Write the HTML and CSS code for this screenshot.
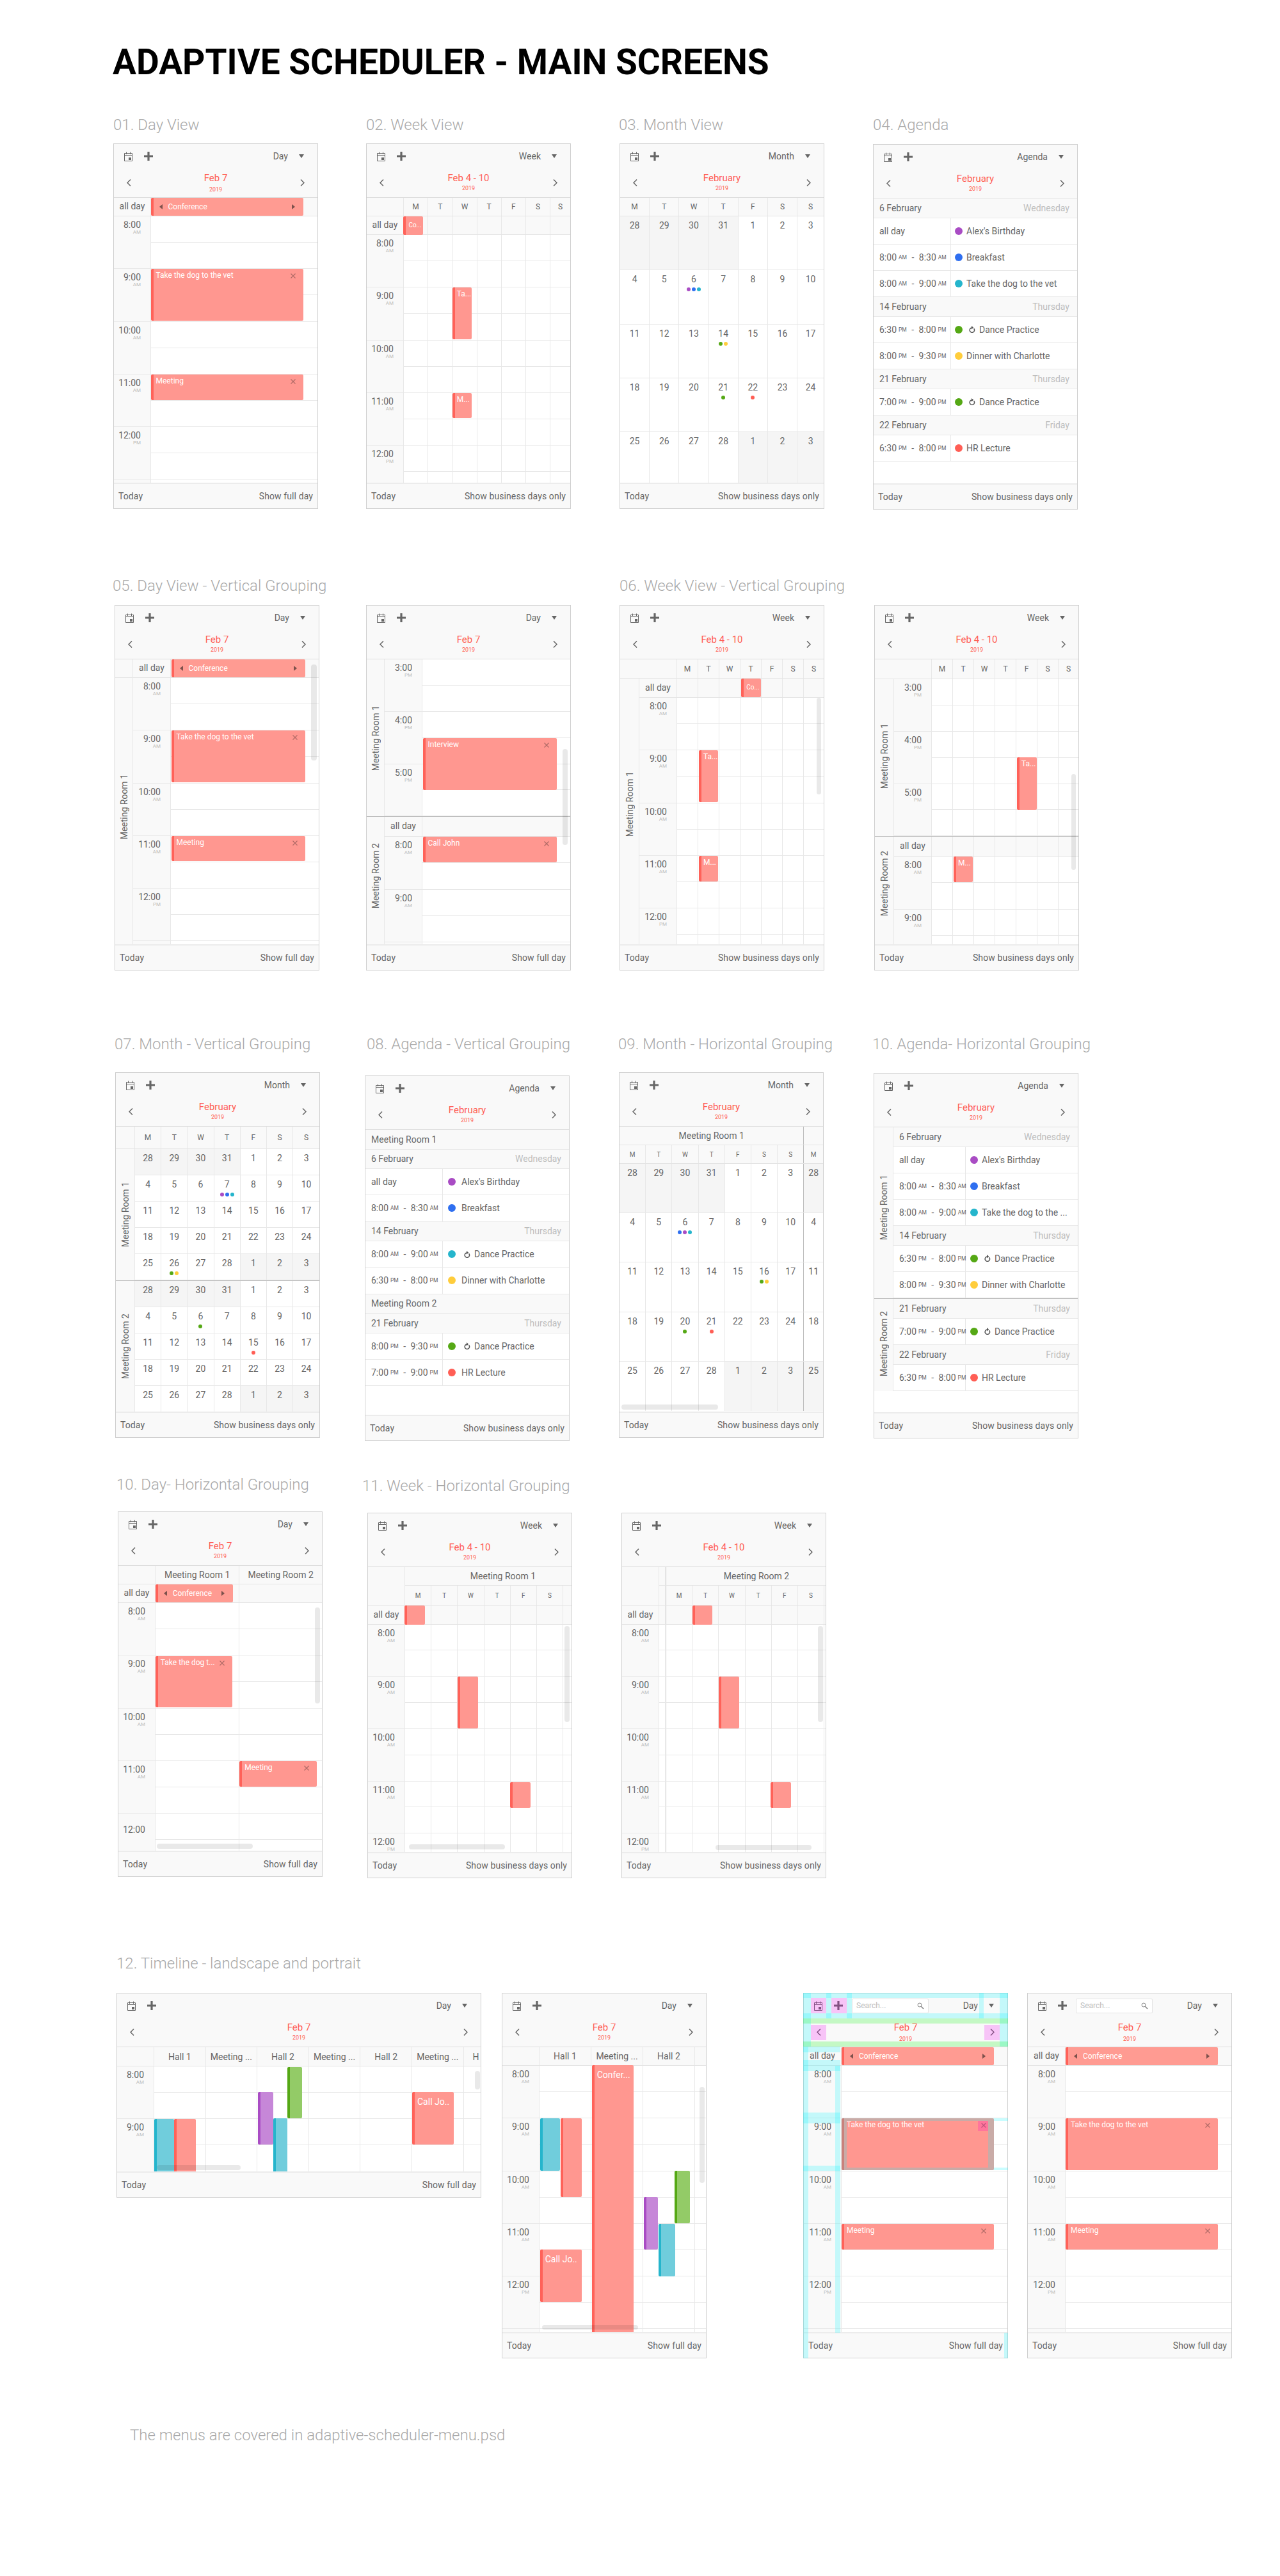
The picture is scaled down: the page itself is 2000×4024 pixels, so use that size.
FILE: index.html
```html
<!DOCTYPE html>
<html lang="en">
<head>
<meta charset="utf-8">
<title>Adaptive Scheduler - Main Screens</title>
<link rel="stylesheet" href="styles.css">
</head>
<body>
<h1 class="heading">ADAPTIVE SCHEDULER - MAIN SCREENS</h1>

<div class="row r1">
  <div class="slot s1"><h2 class="title">01. Day View</h2><div data-p="1"></div></div>
  <div class="slot s2"><h2 class="title">02. Week View</h2><div data-p="2"></div></div>
  <div class="slot s3"><h2 class="title">03. Month View</h2><div data-p="3"></div></div>
  <div class="slot s4"><h2 class="title">04. Agenda</h2><div data-p="4"></div></div>
</div>

<div class="row r2">
  <div class="slot s5"><h2 class="title">05. Day View - Vertical Grouping</h2><div data-p="5"></div></div>
  <div class="slot s6"><div class="title"></div><div data-p="6"></div></div>
  <div class="slot s7"><h2 class="title">06. Week View - Vertical Grouping</h2><div data-p="7"></div></div>
  <div class="slot s8"><div class="title"></div><div data-p="8"></div></div>
</div>

<div class="row r3">
  <div class="slot s9"><h2 class="title">07. Month - Vertical Grouping</h2><div data-p="9"></div></div>
  <div class="slot s10"><h2 class="title">08. Agenda - Vertical Grouping</h2><div data-p="10"></div></div>
  <div class="slot s11"><h2 class="title">09. Month - Horizontal Grouping</h2><div data-p="11"></div></div>
  <div class="slot s12"><h2 class="title">10. Agenda- Horizontal Grouping</h2><div data-p="12"></div></div>
</div>

<div class="row r4">
  <div class="slot s13"><h2 class="title">10. Day- Horizontal Grouping</h2><div data-p="13"></div></div>
  <div class="slot s14"><h2 class="title">11. Week - Horizontal Grouping</h2><div data-p="14"></div></div>
  <div class="slot s15"><div class="title"></div><div data-p="15"></div></div>
</div>

<div class="row r5">
  <div class="slot s16"><h2 class="title">12. Timeline - landscape and portrait</h2><div data-p="16"></div></div>
  <div class="slot s17"><div class="title"></div><div data-p="17"></div></div>
  <div class="slot s18"><div class="title"></div><div data-p="18"></div></div>
  <div class="slot s19"><div class="title"></div><div data-p="19"></div></div>
</div>

<p class="note">The menus are covered in adaptive-scheduler-menu.psd</p>
<script src="app.js"></script>
</body>
</html>
```
FILE: styles.css
```css
* { box-sizing: border-box; }
body { margin: 0; height: 4024px; background: #fff; font-family: Roboto, "Liberation Sans", sans-serif; color: #666; overflow-x: hidden; }
.heading { margin: 67px 0 53px 176px; height: 60px; line-height: 60px; font-size: 55px; font-weight: 700; color: #000; white-space: nowrap; }
.row { display: flex; align-items: flex-start; }
.r1 { height: 720px; } .r2 { height: 716px; } .r3 { height: 688px; } .r4 { height: 748px; } .r5 { height: 737px; }
.slot { width: 320px; flex: none; }
.s16 { width: 571px; }
.title { margin: 0; height: 30px; line-height: 30px; font-size: 24px; font-weight: 300; color: #a9a9a9; white-space: nowrap; }
.note { margin: 0 0 0 203px; height: 30px; line-height: 30px; font-size: 24px; font-weight: 300; color: #a9a9a9; }

.s1 { margin-left: 177px; } .s2 { margin-left: 75px; } .s3 { margin-left: 76px; } .s4 { margin-left: 76px; }
.s5 { margin-left: 179px; } .s6 { margin-left: 73px; } .s7 { margin-left: 76px; } .s8 { margin-left: 78px; }
.s9 { margin-left: 180px; } .s10 { margin-left: 70px; } .s11 { margin-left: 77px; } .s12 { margin-left: 78px; }
.s13 { margin-left: 184px; } .s14 { margin-left: 70px; } .s15 { margin-left: 77px; }
.s16 { margin-left: 182px; } .s17 { margin-left: 31px; } .s18 { margin-left: 151px; } .s19 { margin-left: 30px; }

.s3 .title, .s9 .title, .s11 .title { margin-left: -1px; }
.s5 .title { margin-left: -3px; }
.s12 .title { margin-left: -2px; }
.s10 .title { margin-left: 3px; }
.s13 .title { margin-left: -2px; }
.s14 .title { margin-left: -8px; margin-top: 2px; }

.r1 .panel { margin-top: 14px; }
.s4 .panel { margin-top: 15px; }
.r2 .panel { margin-top: 15px; }
.r3 .panel { margin-top: 29px; }
.s10 .panel { margin-top: 34px; }
.s12 .panel { margin-top: 30px; }
.r4 .panel { margin-top: 27px; }
.s14 .panel { margin-top: 27px; }
.s15 .panel { margin-top: 29px; }
.r5 .panel { margin-top: 31px; }

/* panel */
.panel { position: relative; width: 320px; height: 571px; border: 1px solid #cfcfcf; display: flex; flex-direction: column; background: #fff; font-size: 14px; color: #666; }
.panel.land { width: 570px; height: 320px; }
.bar { flex: none; height: 84px; background: #f9f9f9; border-bottom: 1px solid #dedede; display: flex; flex-direction: column; }
.toolbar { flex: none; height: 38px; display: flex; align-items: center; padding: 0 21px 0 16px; }
.ic-cal { width: 13px; height: 15px; color: #666; flex: none; }
.ic-plus { width: 14px; height: 14px; margin-left: 18px; fill: #666; flex: none; }
.view { margin-left: auto; line-height: 18px; }
.ic-caret { width: 8px; height: 6px; margin-left: 17px; fill: #666; flex: none; }
.search { width: 120px; height: 23px; margin-left: 14px; background: #fff; border: 1px solid #e4e4e4; border-radius: 2px; display: flex; align-items: center; justify-content: space-between; padding: 0 6px; font-size: 12px; color: #bdbdbd; }
.ic-search { width: 11px; height: 11px; }
.datebar { flex: 1; display: flex; justify-content: space-between; align-items: center; padding: 0 20px; }
.chev { width: 7px; height: 11px; fill: none; stroke: #666; stroke-width: 1.5; flex: none; }
.date { align-self: flex-start; margin-top: 6px; text-align: center; color: #ff5e55; }
.date b { display: block; font-weight: 400; font-size: 15px; line-height: 18px; }
.date small { display: block; font-size: 9px; line-height: 12px; margin-top: 1px; }
.date.low small { margin-top: 3px; }
.body { position: relative; flex: 1 1 0; min-height: 0; overflow: hidden; display: flex; flex-direction: column; --tw: 58px; --half: 41.15px; --cw: 38.2px; --gw: 28px; }
.body > * { flex: none; }
.body > .fill { flex: 1 1 0; min-height: 0; overflow: hidden; }
.foot { flex: none; height: 40px; background: #f9f9f9; border-top: 2px solid #ececec; display: flex; align-items: center; justify-content: space-between; padding: 0 7px 0 7px; letter-spacing: 0.1px; }

/* shared cells */
.cell { flex: none; width: var(--cw); border-right: 1px solid #e8e8e8; }
.cell:last-child { flex: 1 1 0; min-width: 0; border-right: 0; }
.cell.stub { width: 11px; border-right-color: #bdbdbd; }
.cell.dark { border-right-color: #bdbdbd; }
.cell.r7 { width: calc(var(--cw) * 7); }

/* time grid */
.hour { display: flex; }
.time { flex: none; width: var(--tw); background: #f9f9f9; border-right: 1px solid #e8e8e8; border-bottom: 1px solid #e8e8e8; padding: 4px 15px 0 0; text-align: right; }
.time b { display: block; font-weight: 400; font-size: 14px; line-height: 18px; }
.time i { display: block; font-style: normal; font-size: 8px; line-height: 8px; color: #bdbdbd; margin-top: -1px; }
.time.dropped { padding-top: 16px; }
.hcol { flex: 1 1 0; min-width: 0; }
.half { display: flex; height: var(--half); border-bottom: 1px solid #e8e8e8; }
.hour.short .half:first-child { height: calc(var(--half) - 1.5px); }
.allday { display: flex; height: 29px; background: #f9f9f9; border-bottom: 1px solid #e4e4e4; }
.allday.h30 { height: 30px; }
.allday.h31 { height: 31px; }
.adlabel { flex: none; width: var(--tw); border-right: 1px solid #e8e8e8; display: flex; align-items: center; justify-content: center; padding-bottom: 2px; }
.adcells { flex: 1 1 0; display: flex; min-width: 0; }
.dayrow { display: flex; background: #f9f9f9; border-bottom: 1px solid #e4e4e4; height: 29px; font-size: 12px; }
.dayrow.h30 { height: 30px; } .dayrow.h31 { height: 31px; } .dayrow.h35 { height: 35px; }
.dayrow.small { font-size: 10px; }
.dayrow .cell { display: flex; align-items: center; justify-content: center; }
.corner { flex: none; width: var(--tw); border-right: 1px solid #e8e8e8; }
.corner.wide90 { width: calc(var(--gw) + var(--tw)); }
.corner.gw { width: var(--gw); }
.roomrow { display: flex; height: 29px; background: #f9f9f9; border-bottom: 1px solid #e4e4e4; }
.roomrow.h30 { height: 30px; }
.roomrow .cell { display: flex; align-items: center; justify-content: center; white-space: nowrap; overflow: hidden; }
.roomrow .cell.edge { justify-content: flex-start; padding-left: 14px; overflow: visible; }
.headgrid { display: flex; }
.headgrid .corner { background: #f9f9f9; border-bottom: 1px solid #e4e4e4; }
.headcol { flex: 1 1 0; min-width: 0; }
.name14 { padding-left: 46px; }
.name15 { padding-left: 33px; }

/* grouping */
.sect { display: flex; }
.sect.div { border-bottom: 1px solid #bdbdbd; }
.group { flex: none; width: var(--gw); background: #f9f9f9; border-right: 1px solid #e8e8e8; display: flex; flex-direction: column; }
.gcorner { flex: none; height: 29px; border-bottom: 1px solid #e4e4e4; }
.glabel { flex: 1 1 0; min-height: 0; display: flex; align-items: center; justify-content: center; }
.glabel span { writing-mode: vertical-rl; transform: rotate(180deg); white-space: nowrap; line-height: 18px; }
.lift4 { padding-bottom: 4px; } .lift5 { padding-bottom: 5px; } .lift14 { padding-bottom: 14px; }
.lift15 { padding-bottom: 15px; } .lift16 { padding-bottom: 16px; } .lift23 { padding-bottom: 23px; }
.sectmain { flex: 1 1 0; min-width: 0; }
.tight { --half: 40.9px; }
.g30 { --gw: 30px; }
.t59 { --tw: 59px; }

/* events */
.ev { position: absolute; border-left: 4px solid; border-radius: 2px; color: #fff; font-size: 12px; line-height: 20px; padding-left: 4px; white-space: nowrap; overflow: hidden; }
.ev.red { background: #ff9790; border-color: #ff6259; }
.ev.cyan { background: #70cddc; border-color: #25b5cc; }
.ev.purple { background: #c687d8; border-color: #a94cc4; }
.ev.green { background: #93cb67; border-color: #55a815; }
.ev.tiny { font-size: 10px; line-height: 28px; padding-left: 4px; }
.ev.week { font-size: 12px; padding-left: 3px; }
.ev.big { font-size: 14px; line-height: 30px; padding-left: 4px; }
.ev.span { display: flex; align-items: center; padding-left: 9px; background: #ff9b92; }
.tri { width: 5px; height: 8px; fill: #7d514c; flex: none; }
.span .label { margin-left: 9px; }
.span .tri.r { margin-left: auto; margin-right: 13px; }
.x { position: absolute; right: 12px; top: 7px; width: 8px; height: 8px; stroke: #b06a66; stroke-width: 1.2; fill: none; }

/* scrollbars */
.sb { position: absolute; background: rgba(0, 0, 0, 0.085); border-radius: 4px; }

/* month */
.wk { display: flex; --wh: 41px; height: var(--wh); border-bottom: 1px solid #e8e8e8; }
.wk.w84 { --wh: 84.3px; }
.wk.w77 { --wh: 77.2px; }
.wk.last { border-bottom: 0; }
.mc { text-align: center; padding-top: 4px; line-height: 20px; }
.mc.dim { background: #f5f5f5; }
.dots { display: flex; justify-content: center; gap: 2px; margin-top: 3px; }
.dot { width: 6px; height: 6px; border-radius: 50%; flex: none; }
.c-purple { background: #a94cc4; } .c-blue { background: #2f6ff0; } .c-cyan { background: #25b5cc; }
.c-green { background: #55a815; } .c-yellow { background: #ffcd3c; } .c-red { background: #ff5e55; }
.m46 { --cw: 46.2px; }
.m41 { --cw: 41.2px; }
.m33 { --cw: 33px; }
.m38 { --cw: 38.2px; }
.m131 { --cw: 131.3px; }
.m80 { --cw: 80.6px; }
.m81 { --cw: 81px; }

/* agenda */
.arow { display: flex; align-items: center; justify-content: space-between; height: 30.6px; padding: 0 12px 0 9px; background: #f9f9f9; border-bottom: 1px solid #e8e8e8; }
.wd { color: #bdbdbd; }
.aitem { display: flex; height: 41.2px; border-bottom: 1px solid #e8e8e8; background: #fff; white-space: nowrap; }
.atime { flex: none; width: 121px; border-right: 1px solid #e8e8e8; display: flex; align-items: center; padding-left: 9px; }
.atime sup { font-size: 8.5px; line-height: 0; vertical-align: 4px; margin-left: 3px; }
.atime .to { margin: 0 4px; }
.aev { flex: 1 1 0; min-width: 0; display: flex; align-items: center; padding-left: 6px; }
.aev .bub { width: 12px; height: 12px; border-radius: 50%; margin-right: 6px; flex: none; }
.rp { width: 11px; height: 11px; margin: 0 6px 0 3px; fill: none; stroke: #555; stroke-width: 1.5; flex: none; }
.ag10 .aev { padding-left: 8px; }
.ag10 .aev .bub { margin-right: 9px; }
.ag12 .atime { width: 113px; }
.ag12 .aev { padding-left: 7px; }

/* redline marks on the annotated frame */
.marks { position: absolute; inset: 0; pointer-events: none; }
.mark { position: absolute; }
.m-c { background: rgba(0, 245, 255, 0.21); }
.m-g { background: rgba(0, 245, 0, 0.21); }
.m-p { background: rgba(240, 0, 240, 0.21); }
.m-x { background: rgba(255, 0, 200, 0.22); }
```
FILE: app.js
```js
const ICON = {
  cal: '<svg class="ic-cal" viewBox="0 0 13 15"><path d="M.5 2.5h12v12H.5zM.5 5.5h12M3.5 .5v3.5M9.5 .5v3.5" fill="none" stroke="currentColor"/><rect x="7" y="9" width="4" height="4" fill="currentColor"/></svg>',
  plus: '<svg class="ic-plus" viewBox="0 0 14 14"><path d="M5.4 0h3.2v5.4H14v3.2H8.6V14H5.4V8.6H0V5.4h5.4z"/></svg>',
  caret: '<svg class="ic-caret" viewBox="0 0 8 6"><path d="M0 0h8L4 6z"/></svg>',
  prev: '<svg class="chev" viewBox="0 0 7 11"><path d="M6 .5 1 5.5l5 5"/></svg>',
  next: '<svg class="chev" viewBox="0 0 7 11"><path d="M1 .5l5 5-5 5"/></svg>',
  x: '<svg class="x" viewBox="0 0 8 8"><path d="M.5.5l7 7M7.5.5l-7 7"/></svg>',
  triL: '<svg class="tri l" viewBox="0 0 5 8"><path d="M5 0v8L0 4z"/></svg>',
  triR: '<svg class="tri r" viewBox="0 0 5 8"><path d="M0 0v8l5-4z"/></svg>',
  rp: '<svg class="rp" viewBox="0 0 11 11"><path d="M8.6 4.2A3.7 3.7 0 1 1 5.5 3"/><path d="M5 0v5.6L8.2 2.8z" fill="#555" stroke="none"/></svg>',
  search: '<svg class="ic-search" viewBox="0 0 11 11"><circle cx="4" cy="4" r="3" fill="none" stroke="#888"/><path d="M6.3 6.3 10 10" stroke="#888" stroke-width="1.6"/></svg>'
};
const WEEK = ['M', 'T', 'W', 'T', 'F', 'S', 'S'];
const MONTH = [
  [28, 29, 30, 31, 1, 2, 3], [4, 5, 6, 7, 8, 9, 10], [11, 12, 13, 14, 15, 16, 17],
  [18, 19, 20, 21, 22, 23, 24], [25, 26, 27, 28, 1, 2, 3]
];
const isDim = (w, c) => (w === 0 && c < 4) || (w === 4 && c > 3);

function panel(o) {
  const cls = o.cls ? ' ' + o.cls : '';
  return `<section class="panel${cls}">
    <header class="bar">
      <div class="toolbar">${ICON.cal}${ICON.plus}${o.search ? `<div class="search"><span>Search...</span>${ICON.search}</div>` : ''}<span class="view">${o.view}</span>${ICON.caret}</div>
      <div class="datebar">${ICON.prev}<div class="date${o.low ? ' low' : ''}"><b>${o.date}</b><small>2019</small></div>${ICON.next}</div>
    </header>
    <div class="body ${o.bodyCls || ''}">${o.body}${o.over || ''}</div>
    <footer class="foot"><span>Today</span><span>${o.foot}</span></footer>
    ${o.marks || ''}
  </section>`;
}
const cells = (n, stub) => (stub ? '<div class="cell stub"></div>' : '') + '<div class="cell"></div>'.repeat(n);
function hours(list, n, opt = {}) {
  const c = cells(n, opt.stub);
  return list.map((l, i) => {
    const [t, m] = l.split(' ');
    const short = (opt.short || []).includes(i) ? ' short' : '';
    const drop = opt.drop === i ? ' dropped' : '';
    const label = l ? `<b>${t}</b>${m ? `<i>${m}</i>` : ''}` : '';
    return `<div class="hour${short}"><div class="time${drop}">${label}</div><div class="hcol"><div class="half">${c}</div><div class="half">${c}</div></div></div>`;
  }).join('');
}
const allday = (n, stub, h) => `<div class="allday ${h || ''}"><div class="adlabel">all day</div><div class="adcells">${cells(n, stub)}</div></div>`;
function dayrow(letters, h, corner, stub) {
  const ls = letters.map(l => `<div class="cell">${l}</div>`).join('');
  return `<div class="dayrow ${h || ''}">${corner ? '<div class="corner"></div>' : ''}${stub ? '<div class="cell stub"></div>' : ''}${ls}</div>`;
}
function group(label, lift, main, o = {}) {
  return `<div class="sect ${o.cls || ''}"><div class="group">${o.corner ? '<div class="gcorner"></div>' : ''}<div class="glabel ${lift || ''}"><span>${label}</span></div></div><div class="sectmain">${main}</div></div>`;
}
function ev(kind, b, inner) {
  return `<div class="ev ${kind}" style="left:${b[0] - 1}px;top:${b[2] - 85}px;width:${b[1] - b[0]}px;height:${b[3] - b[2]}px">${inner || ''}</div>`;
}
const closing = t => `${t}${ICON.x}`;
const spanEv = b => ev('red span', b, `${ICON.triL}<span class="label">Conference</span>${ICON.triR}`);
const sb = (x0, x1, y0, y1) => `<div class="sb" style="left:${x0 - 1}px;top:${y0 - 85}px;width:${x1 - x0}px;height:${y1 - y0}px"></div>`;

function month(dots, o = {}) {
  const cols = o.cols || 7;
  return MONTH.map((wk, w) => {
    const row = [];
    for (let c = 0; c < cols; c++) {
      const cc = c % 7;
      const dim = isDim(w, c >= 7 ? 99 : cc) || (c >= 7 && w === 0);
      const d = dots[w + ',' + c];
      const dark = o.darkAt === c ? ' dark' : '';
      row.push(`<div class="cell mc${dim ? ' dim' : ''}${dark}">${wk[cc]}${d ? `<div class="dots">${d.map(k => `<span class="dot c-${k}"></span>`).join('')}</div>` : ''}</div>`);
    }
    const last = w === 4 && o.lastFlat ? ' last' : '';
    return `<div class="wk ${o.wk || ''}${last}">${row.join('')}</div>`;
  }).join('');
}

const tm = (a, ap, b, bp) => `<span>${a}</span><sup>${ap}</sup><span class="to">&nbsp;-</span><span>&nbsp;${b}</span><sup>${bp}</sup>`;
function item(time, color, text, repeat) {
  return `<div class="aitem"><div class="atime">${time}</div><div class="aev"><span class="bub c-${color}"></span>${repeat ? ICON.rp : ''}<span>${text}</span></div></div>`;
}
const adate = (a, b) => `<div class="arow"><span>${a}</span><span class="wd">${b}</span></div>`;
const aroom = a => `<div class="arow"><span>${a}</span></div>`;

const DAY_HOURS = ['8:00 AM', '9:00 AM', '10:00 AM', '11:00 AM', '12:00 PM', ''];
const evDay = [
  spanEv([58.5, 297, 85, 113]),
  ev('red', [58.5, 297, 196, 277], closing('Take the dog to the vet')),
  ev('red', [58.5, 297, 361, 401], closing('Meeting'))
].join('');
const weekHead = h => `<div class="dayrow ${h}"><div class="corner wide90"></div>${WEEK.map(l => `<div class="cell">${l}</div>`).join('')}</div>`;

const PANELS = {
  1: () => panel({ view: 'Day', date: 'Feb 7', low: 1, foot: 'Show full day',
    body: allday(1) + hours(DAY_HOURS, 1), over: evDay }),
  2: () => panel({ view: 'Week', date: 'Feb 4 - 10', foot: 'Show business days only', bodyCls: 'm38',
    body: dayrow(WEEK, '', true) + allday(7) + hours(DAY_HOURS, 7),
    over: ev('red tiny', [58.4, 89.5, 114, 142.6], 'Co...') + ev('red week', [134.7, 164.8, 225.2, 306.4], 'Ta...') + ev('red week', [134.7, 164.8, 389.6, 429.5], 'M...') }),
  3: () => panel({ view: 'Month', date: 'February', foot: 'Show business days only', bodyCls: 'm46',
    body: dayrow(WEEK) + month({ '1,2': ['purple', 'blue', 'cyan'], '2,3': ['green', 'yellow'], '3,3': ['green'], '3,4': ['red'] }, { wk: 'w84', lastFlat: 1 }) }),
  4: () => panel({ view: 'Agenda', date: 'February', foot: 'Show business days only',
    body: adate('6 February', 'Wednesday') + item('all day', 'purple', "Alex's Birthday") + item(tm('8:00', 'AM', '8:30', 'AM'), 'blue', 'Breakfast') + item(tm('8:00', 'AM', '9:00', 'AM'), 'cyan', 'Take the dog to the vet')
      + adate('14 February', 'Thursday') + item(tm('6:30', 'PM', '8:00', 'PM'), 'green', 'Dance Practice', 1) + item(tm('8:00', 'PM', '9:30', 'PM'), 'yellow', 'Dinner with Charlotte')
      + adate('21 February', 'Thursday') + item(tm('7:00', 'PM', '9:00', 'PM'), 'green', 'Dance Practice', 1)
      + adate('22 February', 'Friday') + item(tm('6:30', 'PM', '8:00', 'PM'), 'red', 'HR Lecture') }),
  5: () => panel({ view: 'Day', date: 'Feb 7', foot: 'Show full day', bodyCls: 't59',
    body: group('Meeting Room 1', 'lift14', allday(1) + hours(DAY_HOURS, 1), { cls: 'fill', corner: 1 }),
    over: spanEv([88.5, 297.6, 85, 113]) + ev('red', [88.5, 297.6, 196.4, 277], closing('Take the dog to the vet')) + ev('red', [88.5, 297.6, 360.6, 400.3], closing('Meeting')) + sb(307.4, 315.7, 93, 243) }),
  6: () => panel({ view: 'Day', date: 'Feb 7', foot: 'Show full day', bodyCls: 't59',
    body: `<div class="tight">${group('Meeting Room 1', '', hours(['3:00 PM', '4:00 PM', '5:00 PM'], 1), { cls: 'div' })}</div>`
      + group('Meeting Room 2', 'lift15', allday(1, false, 'h31') + hours(['8:00 AM', '9:00 AM', ''], 1), { cls: 'fill' }),
    over: ev('red', [88.5, 297.6, 208, 289], closing('Interview')) + ev('red', [88.5, 297.6, 362, 402], closing('Call John')) + sb(307, 315, 224.7, 374.6) }),
  7: () => panel({ view: 'Week', date: 'Feb 4 - 10', foot: 'Show business days only', bodyCls: 't59 g30 m33',
    body: weekHead('h30')
      + group('Meeting Room 1', 'lift23', allday(7, false, 'h30') + hours(DAY_HOURS, 7), { cls: 'fill' }),
    over: ev('red tiny', [190.2, 221.4, 114.9, 144], 'Co...') + ev('red week', [124, 154, 227.2, 308.3], 'Ta...') + ev('red week', [124, 154, 391.9, 431.6], 'M...') + sb(308, 315, 145, 296) }),
  8: () => panel({ view: 'Week', date: 'Feb 4 - 10', foot: 'Show business days only', bodyCls: 't59 g30 m33',
    body: weekHead('h31')
      + `<div class="tight">${group('Meeting Room 1', 'lift5', hours(['3:00 PM', '4:00 PM', '5:00 PM'], 7), { cls: 'div' })}</div>`
      + group('Meeting Room 2', 'lift23', allday(7, false, 'h31') + hours(['8:00 AM', '9:00 AM', ''], 7), { cls: 'fill' }),
    over: ev('red week', [223, 253.5, 238, 319.6], 'Ta...') + ev('red week', [124, 154, 392.9, 432.6], 'M...') + sb(308, 315, 264, 413.5) }),
  9: () => panel({ view: 'Month', date: 'February', foot: 'Show business days only', bodyCls: 'g30 m41',
    body: `<div class="dayrow h35"><div class="corner gw"></div>${WEEK.map(l => `<div class="cell">${l}</div>`).join('')}</div>`
      + group('Meeting Room 1', '', month({ '1,3': ['purple', 'blue', 'cyan'], '4,1': ['green', 'yellow'] }), { cls: 'div' })
      + group('Meeting Room 2', '', month({ '1,2': ['green'], '2,4': ['red'] }, { lastFlat: 1 }), { cls: 'fill' }) }),
  10: () => panel({ view: 'Agenda', date: 'February', foot: 'Show business days only', bodyCls: 'ag10',
    body: aroom('Meeting Room 1') + adate('6 February', 'Wednesday') + item('all day', 'purple', "Alex's Birthday") + item(tm('8:00', 'AM', '8:30', 'AM'), 'blue', 'Breakfast')
      + adate('14 February', 'Thursday') + item(tm('8:00', 'AM', '9:00', 'AM'), 'cyan', 'Dance Practice', 1) + item(tm('6:30', 'PM', '8:00', 'PM'), 'yellow', 'Dinner with Charlotte')
      + aroom('Meeting Room 2') + adate('21 February', 'Thursday') + item(tm('8:00', 'PM', '9:30', 'PM'), 'green', 'Dance Practice', 1) + item(tm('7:00', 'PM', '9:00', 'PM'), 'red', 'HR Lecture') }),
  11: () => panel({ view: 'Month', date: 'February', foot: 'Show business days only', bodyCls: 'm41',
    body: '<div class="roomrow"><div class="cell r7 dark">Meeting Room 1</div><div class="cell"></div></div>'
      + `<div class="dayrow small">${WEEK.concat('M').map((l, i) => `<div class="cell${i === 6 ? ' dark' : ''}">${l}</div>`).join('')}</div>`
      + month({ '1,2': ['blue', 'purple', 'cyan'], '2,5': ['green', 'yellow'], '3,2': ['green'], '3,3': ['red'] }, { wk: 'w77', cols: 8, darkAt: 6, lastFlat: 1 }),
    over: sb(4.4, 155, 519, 527) }),
  12: () => panel({ view: 'Agenda', date: 'February', foot: 'Show business days only', bodyCls: 'ag12 g30',
    body: group('Meeting Room 1', 'lift16', adate('6 February', 'Wednesday') + item('all day', 'purple', "Alex's Birthday") + item(tm('8:00', 'AM', '8:30', 'AM'), 'blue', 'Breakfast') + item(tm('8:00', 'AM', '9:00', 'AM'), 'cyan', 'Take the dog to the ...')
        + adate('14 February', 'Thursday') + item(tm('6:30', 'PM', '8:00', 'PM'), 'green', 'Dance Practice', 1) + item(tm('8:00', 'PM', '9:30', 'PM'), 'yellow', 'Dinner with Charlotte'), { cls: 'div' })
      + group('Meeting Room 2', 'lift4', adate('21 February', 'Thursday') + item(tm('7:00', 'PM', '9:00', 'PM'), 'green', 'Dance Practice', 1) + adate('22 February', 'Friday') + item(tm('6:30', 'PM', '8:00', 'PM'), 'red', 'HR Lecture')) }),
  13: () => panel({ view: 'Day', date: 'Feb 7', foot: 'Show full day', bodyCls: 'm131',
    body: '<div class="roomrow"><div class="corner"></div><div class="cell">Meeting Room 1</div><div class="cell">Meeting Room 2</div></div>'
      + allday(2) + hours(['8:00 AM', '9:00 AM', '10:00 AM', '11:00 AM', '12:00'], 2, { drop: 4 }),
    over: spanEv([58.8, 180.5, 114, 142.3]) + ev('red', [58.8, 179, 225.5, 306.2], closing('Take the dog t...')) + ev('red', [190.2, 310.7, 389.8, 429.9], closing('Meeting')) + sb(308, 315.8, 150, 300) + sb(60.8, 211, 519, 527) }),
  14: () => panel({ view: 'Week', date: 'Feb 4 - 10', foot: 'Show business days only', bodyCls: 'm41',
    body: `<div class="headgrid"><div class="corner"></div><div class="headcol"><div class="roomrow"><div class="cell"><span class="name14">Meeting Room 1</span></div></div>${dayrow(['M', 'T', 'W', 'T', 'F', 'S', ''], 'h31 small')}</div></div>`
      + allday(7, false, 'h30') + hours(['8:00 AM', '9:00 AM', '10:00 AM', '11:00 AM', '12:00 PM'], 7, { short: [0, 3] }),
    over: ev('red', [58.4, 89.6, 145.3, 174.8]) + ev('red', [141, 173, 256.3, 337.4]) + ev('red', [223, 255, 421, 461]) + sb(307.9, 315.7, 177.4, 327.3) + sb(64.7, 215, 518, 526) }),
  15: () => panel({ view: 'Week', date: 'Feb 4 - 10', foot: 'Show business days only', bodyCls: 'm41',
    body: `<div class="headgrid"><div class="corner"></div><div class="headcol"><div class="roomrow"><div class="cell stub"></div><div class="cell"><span class="name15">Meeting Room 2</span></div></div>${dayrow(['M', 'T', 'W', 'T', 'F', 'S', ''], 'h31 small', false, true)}</div></div>`
      + allday(7, true, 'h30') + hours(['8:00 AM', '9:00 AM', '10:00 AM', '11:00 AM', '12:00 PM'], 7, { short: [0, 3], stub: true }),
    over: ev('red', [110.7, 141.7, 145.3, 174.8]) + ev('red', [151.7, 183.7, 256.3, 337.4]) + ev('red', [232.7, 264.7, 421, 461]) + sb(306.7, 315, 177.4, 327.3) + sb(146.7, 296.7, 519, 527) }),
  16: () => panel({ view: 'Day', date: 'Feb 7', foot: 'Show full day', cls: 'land', bodyCls: 'm80',
    body: `<div class="roomrow h30"><div class="corner"></div>${['Hall 1', 'Meeting ...', 'Hall 2', 'Meeting ...', 'Hall 2', 'Meeting ...'].map(t => `<div class="cell">${t}</div>`).join('')}<div class="cell edge">H</div></div>`
      + hours(['8:00 AM', '9:00 AM', ''], 7),
    over: ev('cyan', [58.9, 90.3, 197, 281]) + ev('red', [89.7, 124, 197, 282]) + ev('purple', [221, 244.6, 154.7, 237]) + ev('green', [266.6, 290.5, 115.7, 195.9]) + ev('cyan', [244.5, 267.2, 196.4, 281]) + ev('red big', [462, 527, 154.7, 237], 'Call Jo..') + sb(560, 568, 122, 151) + sb(63.3, 194, 269, 277) }),
  17: () => panel({ view: 'Day', date: 'Feb 7', foot: 'Show full day', bodyCls: 'm81',
    body: `<div class="roomrow"><div class="corner"></div>${['Hall 1', 'Meeting ...', 'Hall 2'].map(t => `<div class="cell">${t}</div>`).join('')}<div class="cell"></div></div>`
      + hours(DAY_HOURS, 4),
    over: ev('cyan', [59.7, 91.5, 195.9, 277.8]) + ev('red', [91.5, 125.3, 195.9, 318.8]) + ev('red big', [59.7, 125.3, 400.8, 483.1], 'Call Jo..') + ev('red big', [140.7, 206.5, 113, 540], 'Confer...') + ev('purple', [221.7, 244.5, 318.5, 400.8]) + ev('cyan', [244.5, 270.9, 360.6, 442.6]) + ev('green', [270.3, 293.6, 278.2, 360.2]) + sb(309, 317, 147, 297) + sb(62.6, 213, 519, 526) }),
  18: () => searchDay(marks()),
  19: () => searchDay('')
};

function searchDay(m) {
  return panel({ view: 'Day', date: 'Feb 7', low: 1, foot: 'Show full day', search: 1, bodyCls: 't59',
    body: allday(1) + hours(DAY_HOURS, 1),
    over: spanEv([60, 298, 85, 113]) + ev('red', [60, 298, 196.4, 277.4], closing('Take the dog to the vet')) + ev('red', [60, 298, 361, 400.8], closing('Meeting')),
    marks: m });
}
function marks() {
  const list = [
    ['c', 0, 0, 320, 7.5], ['c', 0, 32, 320, 40], ['c', 0, 0, 12, 84], ['c', 35.7, 0, 43.7, 40], ['c', 67.7, 0, 76, 40], ['c', 274.7, 0, 282.3, 40], ['c', 306.7, 0, 320, 84],
    ['g', 0, 40, 320, 47.7], ['g', 0, 75.7, 320, 84.3],
    ['p', 12, 8, 35.7, 31.7], ['p', 43.7, 8, 67.7, 31.7], ['p', 12, 49.7, 35.7, 73.7], ['p', 282.7, 49.7, 306.7, 73.7],
    ['c', 0, 84, 8, 531], ['c', 50, 113.5, 58, 531], ['c', 0, 84, 58, 92.7], ['c', 0, 104.7, 58, 113.3], ['c', 0, 113.3, 58, 122], ['c', 0, 187, 58, 204], ['c', 0, 270, 58, 278],
    ['c', 0, 531, 8, 571], ['c', 314, 531, 320, 571],
    ['c', 60, 196, 320, 200], ['c', 60, 273, 320, 277], ['c', 60, 200, 68, 273], ['c', 289, 200, 298, 273],
    ['x', 272.7, 200, 288.7, 215.7]
  ];
  return `<div class="marks">${list.map(([k, a, b, c, d]) => `<div class="mark m-${k}" style="left:${a - 1}px;top:${b - 1}px;width:${c - a}px;height:${d - b}px"></div>`).join('')}</div>`;
}

document.querySelectorAll('[data-p]').forEach(el => {
  el.outerHTML = PANELS[el.dataset.p]();
});
```
